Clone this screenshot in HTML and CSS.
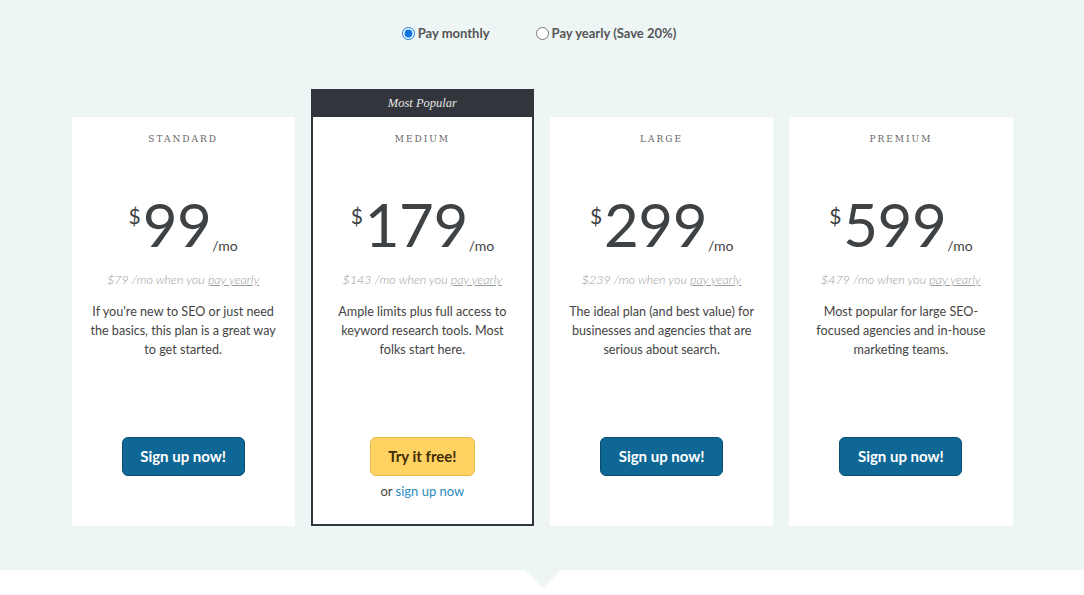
FILE: index.html
```html
<!DOCTYPE html>
<html lang="en">
<head>
<meta charset="utf-8">
<title>Pricing</title>
<link rel="stylesheet" href="styles.css">
</head>
<body>
<section class="pricing">
  <div class="toggle">
    <label class="opt"><input type="radio" name="billing" checked> <span>Pay monthly</span></label>
    <label class="opt"><input type="radio" name="billing"> <span>Pay yearly (Save 20%)</span></label>
  </div>

  <div class="plans">
    <div class="card">
      <div class="plan-name">STANDARD</div>
      <div class="price"><span class="cur">$</span><span class="amt">99</span><span class="per">/mo</span></div>
      <div class="yearly">$79 /mo when you <span class="u">pay yearly</span></div>
      <p class="desc">If you're new to SEO or just need the basics, this plan is a great way to get started.</p>
      <div class="actions"><a class="btn btn-blue">Sign up now!</a></div>
    </div>

    <div class="featured">
      <div class="badge">Most Popular</div>
      <div class="card card-inner">
        <div class="plan-name">MEDIUM</div>
        <div class="price"><span class="cur">$</span><span class="amt">179</span><span class="per">/mo</span></div>
        <div class="yearly">$143 /mo when you <span class="u">pay yearly</span></div>
        <p class="desc">Ample limits plus full access to keyword research tools. Most folks start here.</p>
        <div class="actions"><a class="btn btn-yellow">Try it free!</a>
          <div class="alt">or <a class="link">sign up now</a></div>
        </div>
      </div>
    </div>

    <div class="card">
      <div class="plan-name">LARGE</div>
      <div class="price"><span class="cur">$</span><span class="amt">299</span><span class="per">/mo</span></div>
      <div class="yearly">$239 /mo when you <span class="u">pay yearly</span></div>
      <p class="desc">The ideal plan (and best value) for businesses and agencies that are serious about search.</p>
      <div class="actions"><a class="btn btn-blue">Sign up now!</a></div>
    </div>

    <div class="card">
      <div class="plan-name">PREMIUM</div>
      <div class="price"><span class="cur">$</span><span class="amt">599</span><span class="per">/mo</span></div>
      <div class="yearly">$479 /mo when you <span class="u">pay yearly</span></div>
      <p class="desc">Most popular for large SEO-focused agencies and in-house marketing teams.</p>
      <div class="actions"><a class="btn btn-blue">Sign up now!</a></div>
    </div>
  </div>
</section>
<div class="pointer"></div>
</body>
</html>
```

FILE: styles.css
```css
* { box-sizing: border-box; }
html, body { margin: 0; padding: 0; background: #fff; }
body { font-family: Lato, "Open Sans", sans-serif; color: #444; }

.pricing {
  background: #eef5f5;
  height: 570px;
  padding-top: 24px;
}

.toggle {
  display: flex;
  justify-content: center;
  gap: 46px;
  height: 18px;
  align-items: center;
  padding-right: 6px;
}
.opt {
  display: flex;
  align-items: center;
  gap: 3px;
  font-size: 13px;
  font-weight: 700;
  color: #555;
}
.opt input { margin: 0; width: 13px; height: 13px; accent-color: #0b74e5; }

.plans {
  width: 941px;
  margin: 47px auto 0;
  display: grid;
  grid-template-columns: repeat(4, 1fr);
  gap: 16px;
  align-items: end;
}

.card {
  background: #fff;
  height: 409px;
  padding: 15px 16px 0;
  text-align: center;
  display: flex;
  flex-direction: column;
  align-items: stretch;
}

.featured {
  border: 2px solid #32353b;
  background: #fff;
}
.badge {
  background: #32353b;
  color: #e6e6e6;
  height: 26px;
  line-height: 25px;
  text-align: center;
  font-family: "Liberation Serif", serif;
  font-style: italic;
  font-size: 12.5px;
}
.card-inner { height: 407px; padding-left: 14px; padding-right: 14px; }

.plan-name {
  font-family: "DejaVu Serif", serif;
  font-size: 9px;
  letter-spacing: 2px;
  line-height: 14px;
  color: #666;
}

.price {
  margin-top: 48px;
  display: flex;
  justify-content: center;
  align-items: flex-start;
  color: #3f4244;
}
.cur {
  font-size: 21px;
  line-height: 21px;
  margin-top: 11px;
  margin-right: 2px;
}
.amt {
  font-size: 60px;
  line-height: 61px;
  font-weight: 400;
  letter-spacing: -0.5px;
}
.per {
  align-self: flex-end;
  font-size: 14px;
  line-height: 14px;
  margin-left: 1px;
  margin-bottom: 2px;
}

.yearly {
  margin-top: 16px;
  font-size: 12.5px;
  line-height: 18px;
  font-style: italic;
  font-weight: 300;
  color: #999c9d;
}
.u { text-decoration: underline; }

.desc {
  margin: 13px 0 0;
  height: 135px;
  font-size: 12.6px;
  line-height: 19px;
  color: #444;
}

.actions {
  display: flex;
  flex-direction: column;
  align-items: center;
}
.btn {
  display: inline-block;
  height: 39px;
  line-height: 37px;
  padding: 0 17.5px;
  border-radius: 6px;
  font-size: 15px;
  font-weight: 700;
  cursor: pointer;
}
.btn-blue {
  background: #0f6795;
  border: 1px solid #0a4e73;
  color: #fff;
}
.btn-yellow {
  background: #ffd262;
  border: 1px solid #e8b94d;
  color: #3f2b05;
}
.alt {
  margin-top: 6px;
  font-size: 13px;
  line-height: 18px;
  color: #444;
}
.link { color: #2a8cc0; }

.pointer {
  margin-left: 525px;
  width: 36px;
  height: 18px;
  background: #eef5f5;
  clip-path: polygon(0 0, 100% 0, 50% 100%);
}
```
